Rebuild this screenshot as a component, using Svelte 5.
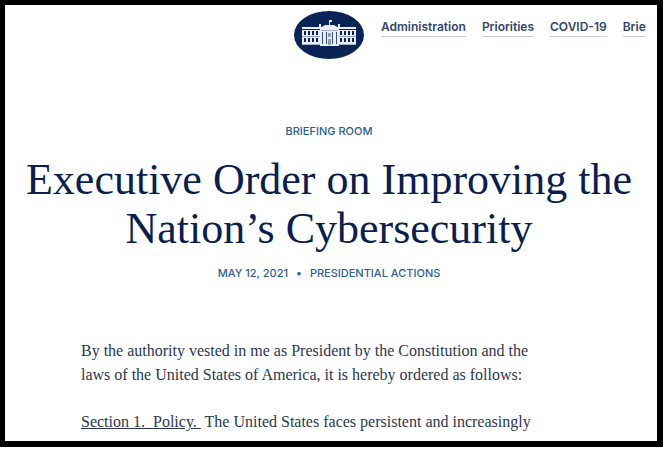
<script lang="ts">
  const navLinks = ["Administration", "Priorities", "COVID-19", "Brie"];
  const windows = [10, 14, 18, 22, 46, 50, 54, 58];
  const columns = [28, 32, 38, 42];
</script>

<div class="page">
  <header class="site-header">
    <a class="logo" href="#home" aria-label="The White House">
      <svg width="70" height="48" viewBox="0 0 70 48" xmlns="http://www.w3.org/2000/svg">
        <ellipse cx="35" cy="24" rx="35" ry="24" fill="#0a2458" />
        <g fill="#e9eef6">
          <!-- flag and roof -->
          <path d="M35 9h3v2h-2v4h-1z" />
          <rect x="25" y="13" width="2" height="3" />
          <rect x="44" y="13" width="2" height="3" />
          <path d="M26 17L31 14h9L45 17z" />
          <!-- wings -->
          <rect x="8" y="16" width="54" height="2" />
          <rect x="8" y="19" width="54" height="14" />
          <rect x="8" y="33" width="54" height="1" opacity="0.7" />
          <rect x="26" y="16" width="19" height="19" />
        </g>
        <g fill="#0a2458">
          {#each windows as x}
            <rect {x} y="20" width="2" height="4" />
            <rect {x} y="27" width="2" height="4" />
          {/each}
          {#each columns as x}
            <rect {x} y="21" width="1" height="12" opacity="0.8" />
          {/each}
          <rect x="34" y="22" width="3" height="4" opacity="0.4" />
          <rect x="34" y="28" width="3" height="6" opacity="0.4" />
          <path d="M27 19h17v1h-17z" opacity="0.3" />
        </g>
        <g fill="#8fa0be">
          <rect x="8" y="25" width="18" height="1" />
          <rect x="45" y="25" width="17" height="1" />
        </g>
      </svg>
    </a>
    <nav aria-label="Main">
      {#each navLinks as label}
        <a href="#{label.toLowerCase()}">{label}</a>
      {/each}
    </nav>
  </header>

  <main>
    <div class="title">
      <a class="label" href="#briefing-room">BRIEFING ROOM</a>
      <h1>Executive Order on Improving the Nation’s Cybersecurity</h1>
      <div class="label meta">
        <time datetime="2021-05-12">MAY 12, 2021</time>
        <span>•</span>
        <a href="#presidential-actions">PRESIDENTIAL ACTIONS</a>
      </div>
    </div>

    <article>
      <p>
        By the authority vested in me as President by the Constitution and the laws of the United
        States of America, it is hereby ordered as follows:
      </p>
      <p><u>Section 1.&nbsp; Policy.&nbsp;</u> The United States faces persistent and increasingly</p>
    </article>
  </main>
</div>

<style>
  :global(body) {
    background: #fff;
  }

  .page {
    margin: 0 3px 3px 0;
    border: 5px solid #000;
    border-right-width: 6px;
    border-bottom-width: 6px;
    color: #0a1f50;
    font-family: Inter, "Liberation Sans", sans-serif;
    overflow: hidden;
  }

  a {
    color: inherit;
    text-decoration: none;
  }

  .site-header {
    display: grid;
    grid-template-columns: 1fr auto 1fr;
    column-gap: 17px;
    padding: 6px 12px 0 8px;
  }

  .logo {
    grid-column: 2;
    height: 48px;
  }

  .logo svg {
    display: block;
  }

  nav {
    display: flex;
    align-items: flex-start;
    gap: 16px;
    min-width: 0;
    padding-top: 7px;
    white-space: nowrap;
  }

  nav a {
    border-bottom: 1px solid #c9ced8;
    color: #33456a;
    font-size: 12px;
    font-weight: 600;
    line-height: 18px;
  }

  .title {
    display: flex;
    flex-direction: column;
    align-items: center;
    padding: 64px 12px 0 8px;
    text-align: center;
  }

  .label {
    color: #2f6092;
    font-size: 11px;
    font-weight: 500;
    line-height: 16px;
  }

  .meta {
    display: flex;
    gap: 8px;
  }

  h1 {
    margin: 16px 0 12px;
    font-family: "Liberation Serif", serif;
    font-size: 44px;
    font-weight: 400;
    line-height: 49px;
  }

  article {
    max-width: 480px;
    margin: 0 auto;
    padding: 58px 20px 7px 0;
    color: #2b3750;
    font-family: "Liberation Serif", serif;
    font-size: 16px;
    line-height: 24px;
  }

  p {
    margin: 0 0 23px;
  }

  p:last-child {
    margin-bottom: 0;
  }
</style>
